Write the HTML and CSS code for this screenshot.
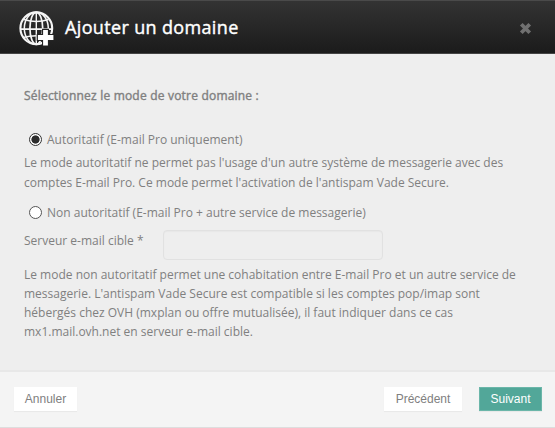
FILE: index.html
```html
<!DOCTYPE html>
<html lang="fr">
<head>
<meta charset="utf-8">
<title>Ajouter un domaine</title>
<link rel="stylesheet" href="styles.css">
</head>
<body>
<div class="modal">
  <header class="header">
    <svg class="globe" viewBox="0 0 36 36" fill="none" stroke="#f5f5f5">
      <circle cx="17.3" cy="17.3" r="15.9" stroke-width="2.1"/>
      <ellipse cx="17.3" cy="17.3" rx="12" ry="16" stroke-width="1.5"/>
      <ellipse cx="17.3" cy="17.3" rx="6.4" ry="16" stroke-width="1.7"/>
      <path d="M17.3 1.3V33.3" stroke-width="1.4"/>
      <path d="M1.3 18.2H33.3M5 8.5Q17.3 12.5 29.6 8.5M4 26.5Q17.3 23 30.6 26.5" stroke-width="1.7"/>
      <path d="M26.5 17.7V35.3M17.7 26.5H35.3" stroke="#232323" stroke-width="7"/>
      <path d="M26.5 18.9V34.4M18.9 26.5H34.4" stroke="#fff" stroke-width="4.8"/>
    </svg>
    <h1 class="title">Ajouter un domaine</h1>
    <button class="close" aria-label="Fermer">
      <svg viewBox="0 0 12 12"><path d="M2.1 2.1L9.9 9.9M9.9 2.1L2.1 9.9" stroke="#707070" stroke-width="3.5"/></svg>
    </button>
  </header>
  <main class="content">
    <p class="intro">Sélectionnez le mode de votre domaine :</p>
    <label class="option"><input class="radio" type="radio" name="mode" checked><span>Autoritatif (E-mail Pro uniquement)</span></label>
    <p class="help">Le mode autoritatif ne permet pas l'usage d'un autre système de messagerie avec des<br>comptes E-mail Pro. Ce mode permet l'activation de l'antispam Vade Secure.</p>
    <label class="option second"><input class="radio" type="radio" name="mode"><span>Non autoritatif (E-mail Pro + autre service de messagerie)</span></label>
    <div class="field"><label for="server">Serveur e-mail cible *</label><input id="server" class="server" type="text"></div>
    <p class="help detail">Le mode non autoritatif permet une cohabitation entre E-mail Pro et un autre service de<br>messagerie. L'antispam Vade Secure est compatible si les comptes pop/imap sont<br>hébergés chez OVH (mxplan ou offre mutualisée), il faut indiquer dans ce cas<br>mx1.mail.ovh.net en serveur e-mail cible.</p>
  </main>
  <footer class="footer">
    <button class="btn cancel">Annuler</button>
    <button class="btn previous">Précédent</button>
    <button class="btn next">Suivant</button>
  </footer>
</div>
</body>
</html>
```
FILE: styles.css
```css
* { box-sizing: border-box; }
body { margin: 0; font-family: "Open Sans", sans-serif; font-size: 12px; color: #808080; }
.modal { width: 555px; height: 428px; display: flex; flex-direction: column; background: #eee; overflow: hidden; }
.header { height: 54px; flex: none; display: flex; align-items: center; padding: 0 23px 0 19px; background: linear-gradient(#333, #1b1b1b); border-top: 1px solid #4a4a4a; border-bottom: 1px solid #444; }
.globe { width: 36px; height: 36px; margin-top: 3px; }
.title { margin: 0 auto 0 10px; font-size: 18px; line-height: 26px; font-weight: 400; letter-spacing: .35px; -webkit-text-stroke: .4px #fff; color: #fff; white-space: nowrap; }
.close { width: 13px; height: 13px; border: 0; padding: 0; background: none; margin-top: 3px; }
.close svg { display: block; width: 13px; height: 13px; }
.content { flex: 1; padding: 32px 24px 0; white-space: nowrap; }
p { margin: 0; }
.intro { line-height: 20px; font-weight: 400; letter-spacing: .2px; -webkit-text-stroke: .4px #808080; }
.option { display: flex; align-items: center; height: 20px; margin-top: 23px; padding-left: 5px; }
.radio { appearance: none; flex: none; width: 13px; height: 13px; margin: 1px 5px 0 0; border: 1px solid #555; border-radius: 50%; background: #fff; }
.radio:checked { background: radial-gradient(circle, #2d2d2d 0 3.7px, #fff 4.5px); border-color: #333; }
.help { line-height: 20px; margin-top: 4px; }
.option.second { margin-top: 9px; }
.field { display: flex; height: 29px; margin-top: 8px; }
.field label { width: 139px; line-height: 22px; }
.server { width: 220px; height: 30px; border: 1px solid #e1e1e1; border-radius: 4px; background: #eee; box-shadow: inset 0 1px 1px #e7e7e7; }
.detail { line-height: 19px; margin-top: 6px; }
.footer { height: 58px; flex: none; display: flex; align-items: flex-start; padding: 15px 13px 0 14px; background: #f4f4f4; border-top: 2px solid #e8e8e8; border-bottom: 1px solid #ddd; }
.btn { height: 24px; padding: 0; border: 0; background: #fff; color: #808080; font: 12px "Liberation Sans", sans-serif; box-shadow: 0 1px 1px #e9e9e9; }
.cancel { width: 63px; margin-right: auto; }
.previous { width: 78px; margin-right: 17px; }
.next { width: 63px; background: #52a799; color: #fff; border: 1px solid #6bb6a9; }
```
